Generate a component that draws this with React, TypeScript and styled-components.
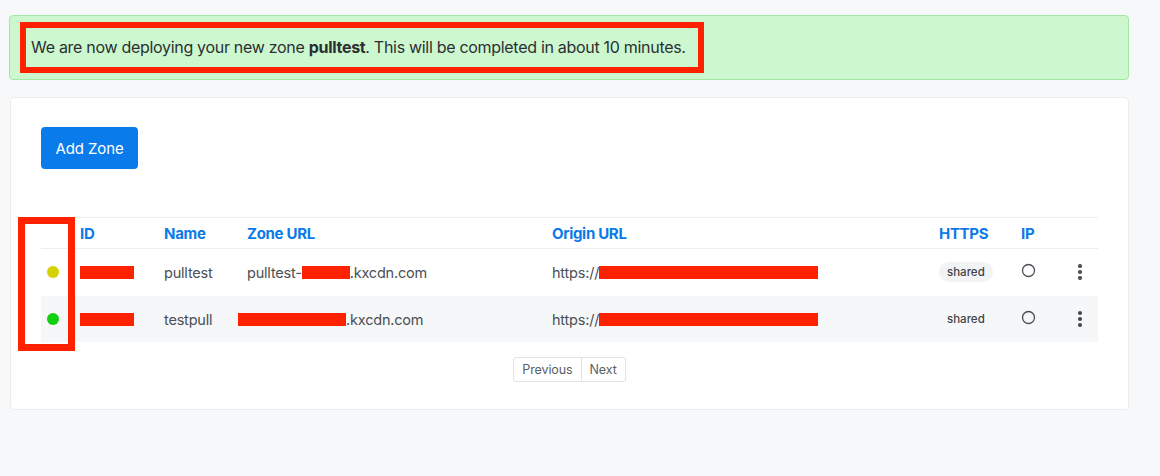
import React from 'react';
import styled, { createGlobalStyle } from 'styled-components';

const GlobalStyle = createGlobalStyle`
  html, body {
    margin: 0;
    padding: 0;
    background: #f7f8fa;
    font-family: Inter, "Noto Sans", "Liberation Sans", sans-serif;
    color: #4a4f55;
  }
`;

const Page = styled.div`
  width: 1120px;
  padding: 15px 0 0 9px;
  display: flex;
  flex-direction: column;
  gap: 17px;
`;

const Alert = styled.div`
  box-sizing: border-box;
  height: 65px;
  padding: 6px 10px;
  background: #cdf7cf;
  border: 1px solid #a2e8a5;
  border-radius: 4px;
  display: flex;
  align-items: flex-start;
`;

const Highlight = styled.div`
  border: 6px solid #ff2200;
  padding: 0 12px 0 5px;
  line-height: 39px;
  font-size: 16px;
  letter-spacing: -0.3px;
  color: #2b2f33;
  white-space: nowrap;

  b {
    font-weight: 700;
  }
`;

const Card = styled.div`
  box-sizing: border-box;
  margin-left: 1px;
  width: 1119px;
  background: #fff;
  border: 1px solid #ececec;
  border-radius: 4px;
  padding: 29px 30px 27px 30px;
`;

const PrimaryButton = styled.button`
  width: 97px;
  height: 42px;
  border: none;
  border-radius: 4px;
  background: #0a7bea;
  color: #fff;
  font-family: inherit;
  font-size: 15px;
  font-weight: 400;
  letter-spacing: -0.1px;
  cursor: pointer;
`;

const TableWrap = styled.div`
  position: relative;
  margin-top: 48px;
`;

const Row = styled.div<{ $shade?: boolean; $head?: boolean }>`
  box-sizing: border-box;
  display: grid;
  grid-template-columns: 39px 84px 83px 305px 387px 82px 1fr;
  align-items: center;
  height: ${p => (p.$head ? '32px' : '46px')};
  background: ${p => (p.$shade ? '#f6f7f9' : '#fff')};
  border-top: ${p => (p.$head ? '1px solid #eceef0' : 'none')};
  border-bottom: ${p => (p.$head ? '1px solid #eceef0' : 'none')};
  margin-top: ${p => (p.$shade ? '1px' : '0')};
  font-size: ${p => (p.$head ? '15px' : '14.5px')};
  letter-spacing: ${p => (p.$head ? '-0.3px' : '-0.2px')};
  color: ${p => (p.$head ? '#0b7ae8' : '#4a4f55')};
  font-weight: ${p => (p.$head ? 700 : 400)};
`;

const Cell = styled.div`
  white-space: nowrap;
  display: flex;
  align-items: center;
`;

const Dot = styled.span<{ $color: string }>`
  display: block;
  width: 12px;
  height: 12px;
  border-radius: 50%;
  margin-left: 6px;
  background: ${p => p.$color};
`;

const Redact = styled.span<{ $w: number }>`
  display: inline-block;
  width: ${p => p.$w}px;
  height: 13px;
  background: #ff2200;
  vertical-align: middle;
`;

const Pill = styled.span<{ $bg: boolean }>`
  display: inline-block;
  padding: 3px 8px;
  border-radius: 12px;
  background: ${p => (p.$bg ? '#f2f3f5' : 'transparent')};
  font-size: 11.5px;
  letter-spacing: 0;
  font-weight: 500;
  color: #3f4448;
`;

const MenuCell = styled(Cell)`
  justify-content: flex-end;
  padding-right: 15px;
`;

const Annotation = styled.div`
  position: absolute;
  left: -23px;
  top: 0;
  width: 57px;
  height: 134px;
  box-sizing: border-box;
  border: 7px solid #ff2200;
  pointer-events: none;
`;

const Pager = styled.div`
  display: flex;
  justify-content: center;
  margin-top: 15px;
`;

const PageButton = styled.button<{ $first?: boolean }>`
  height: 25px;
  padding: 0 8px;
  background: #fff;
  border: 1px solid #dfe2e6;
  border-radius: ${p => (p.$first ? '3px 0 0 3px' : '0 3px 3px 0')};
  margin-left: ${p => (p.$first ? '0' : '-1px')};
  font-family: inherit;
  font-size: 12.5px;
  letter-spacing: -0.1px;
  color: #5a5f64;
`;

const IpIcon = () => (
  <svg width="15" height="15" viewBox="0 0 15 15">
    <circle cx="7.5" cy="7.5" r="6" fill="none" stroke="#4a4f55" strokeWidth="1.3" />
  </svg>
);

const MenuIcon = () => (
  <svg width="6" height="18" viewBox="0 0 6 18">
    <circle cx="3" cy="3" r="2.1" fill="#45494d" />
    <circle cx="3" cy="9" r="2.1" fill="#45494d" />
    <circle cx="3" cy="15" r="2.1" fill="#45494d" />
  </svg>
);

type Zone = {
  status: string;
  name: string;
  zonePrefix: string;
  zoneRedact: number;
};

const zones: Zone[] = [
  { status: '#d6d100', name: 'pulltest', zonePrefix: 'pulltest-', zoneRedact: 48 },
  { status: '#12cf12', name: 'testpull', zonePrefix: '', zoneRedact: 108 },
];

const App: React.FC = () => {
  return (
    <>
      <GlobalStyle />
      <Page>
        <Alert>
          <Highlight>
            We are now deploying your new zone <b>pulltest</b>. This will be completed in about 10 minutes.
          </Highlight>
        </Alert>
        <Card>
          <PrimaryButton>Add Zone</PrimaryButton>
          <TableWrap>
            <Row $head>
              <Cell />
              <Cell>ID</Cell>
              <Cell>Name</Cell>
              <Cell>Zone URL</Cell>
              <Cell>Origin URL</Cell>
              <Cell>HTTPS</Cell>
              <Cell>IP</Cell>
            </Row>
            {zones.map((z, i) => (
              <Row key={z.name} $shade={i % 2 === 1}>
                <Cell>
                  <Dot $color={z.status} />
                </Cell>
                <Cell>
                  <Redact $w={54} />
                </Cell>
                <Cell>{z.name}</Cell>
                <Cell style={{ marginLeft: z.zonePrefix ? 0 : -9 }}>
                  {z.zonePrefix}
                  <Redact $w={z.zoneRedact} />
                  .kxcdn.com
                </Cell>
                <Cell>
                  https://
                  <Redact $w={219} />
                </Cell>
                <Cell>
                  <Pill $bg={i === 0}>shared</Pill>
                </Cell>
                <MenuCell>
                  <span style={{ flex: 1 }}>
                    <IpIcon />
                  </span>
                  <MenuIcon />
                </MenuCell>
              </Row>
            ))}
            <Annotation />
            <Pager>
              <PageButton $first>Previous</PageButton>
              <PageButton>Next</PageButton>
            </Pager>
          </TableWrap>
        </Card>
      </Page>
    </>
  );
};

export default App;
